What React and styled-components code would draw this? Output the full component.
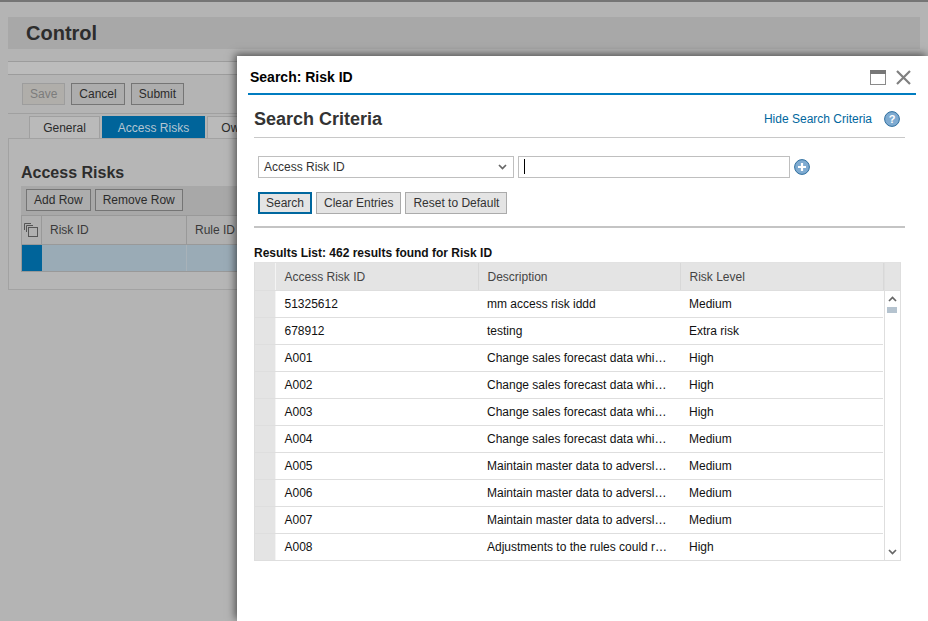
import React from 'react';
import styled, { createGlobalStyle } from 'styled-components';

const GlobalStyle = createGlobalStyle`
  html, body {
    margin: 0;
    padding: 0;
    height: 100%;
    overflow: hidden;
  }
  body {
    font-family: "Liberation Sans", Arial, sans-serif;
    font-size: 12px;
    color: #000;
    background: #b4b4b4;
  }
`;

const Page = styled.div`
  position: relative;
  width: 928px;
  height: 621px;
  overflow: hidden;
  box-sizing: border-box;
  border-top: 2px solid #757575;
  padding: 15px 8px 0;
  background: #b4b4b4;
`;

const PageHeader = styled.div`
  height: 32px;
  background: #a8a8a8;
  display: flex;
  align-items: center;
  padding-left: 18px;
`;

const PageTitle = styled.h1`
  margin: 0;
  font-size: 20px;
  font-weight: bold;
  color: #2d2d2d;
`;

const Strip = styled.div`
  margin-top: 12px;
  height: 12px;
  background: #bcbcbc;
  border-top: 1px solid #9c9c9c;
  border-bottom: 1px solid #9c9c9c;
`;

const Toolbar = styled.div`
  height: 38px;
  display: flex;
  align-items: center;
  gap: 6px;
  padding: 0 14px;
  border-bottom: 1px solid #a0a0a0;
`;

const BgButton = styled.button`
  height: 22px;
  padding: 0 7px;
  font: 12px "Liberation Sans", Arial, sans-serif;
  color: ${({ disabled }) => (disabled ? '#7c7c7c' : '#2b2b2b')};
  background: ${({ disabled }) => (disabled ? '#b0aeaa' : '#adadad')};
  border: 1px solid ${({ disabled }) => (disabled ? '#9d9d9d' : '#757575')};
`;

const Tabs = styled.div`
  display: flex;
  gap: 2px;
  margin-top: 2px;
  padding-left: 21px;
  height: 22px;
`;

const Tab = styled.div`
  width: ${({ $w }) => $w}px;
  box-sizing: border-box;
  display: flex;
  align-items: center;
  justify-content: center;
  color: ${({ $active }) => ($active ? '#b5c6d2' : '#2b2b2b')};
  background: ${({ $active }) => ($active ? '#00649a' : '#bababa')};
  border: 1px solid ${({ $active }) => ($active ? '#00649a' : '#a0a0a0')};
  border-bottom: 0;
`;

const Panel = styled.div`
  height: 152px;
  box-sizing: border-box;
  background: #b6b6b6;
  border: 1px solid #a2a2a2;
  padding: 24px 12px 0;
`;

const PanelTitle = styled.h2`
  margin: 0;
  font-size: 16px;
  line-height: 20px;
  font-weight: bold;
  color: #2d2d2d;
`;

const TableBar = styled.div`
  height: 29px;
  box-sizing: border-box;
  margin-top: 3px;
  background: #a8a8a8;
  display: flex;
  align-items: center;
  gap: 4px;
  padding: 0 0 1px 5px;
`;

const BgGrid = styled.div`
  display: grid;
  grid-template-columns: 20px 145px 200px;
  grid-template-rows: 29px 26px;
  border: 1px solid #999;
  border-right: 0;
`;

const BgHead = styled.div`
  display: flex;
  align-items: center;
  padding-left: 8px;
  color: #3a3a3a;
  background: #b0b0b0;
  border-right: 1px solid #999;
  border-bottom: 1px solid #999;
`;

const BgCorner = styled(BgHead)`
  padding-left: 1px;
`;

const BgMarker = styled.div`
  background: #00649a;
`;

const BgCell = styled.div`
  background: #9aabb6;
  border-right: 1px solid #a8b2b9;
`;

const Dialog = styled.section`
  position: absolute;
  left: 237px;
  top: 54px;
  width: 691px;
  height: 565px;
  box-sizing: border-box;
  background: #fff;
  padding: 0 12px 0 11px;
  box-shadow: -2px -2px 8px rgba(0, 0, 0, 0.55);
`;

const DialogHeader = styled.header`
  height: 39px;
  display: flex;
  align-items: center;
  justify-content: space-between;
  box-sizing: border-box;
  padding: 5px 5px 0 2px;
  border-bottom: 2px solid #007cc0;
`;

const DialogTitle = styled.h1`
  margin: 0;
  font-size: 14px;
  font-weight: bold;
  color: #000;
`;

const HeaderIcons = styled.div`
  display: flex;
  align-items: center;
  gap: 10px;
`;

const Body = styled.div`
  padding: 0 11px 0 6px;
`;

const CriteriaHead = styled.div`
  height: 43px;
  box-sizing: border-box;
  display: flex;
  align-items: center;
  justify-content: space-between;
  border-bottom: 1px solid #c8c8c8;
  padding: 6px 5px 0 0;
`;

const CriteriaTitle = styled.h2`
  margin: 0;
  font-size: 18px;
  font-weight: bold;
  color: #333;
`;

const HideLink = styled.a`
  display: flex;
  align-items: center;
  gap: 12px;
  color: #00679e;
  text-decoration: none;
`;

const SearchRow = styled.div`
  display: flex;
  align-items: center;
  gap: 4px;
  margin: 18px 0 0 4px;
`;

const FieldBox = styled.div`
  height: 22px;
  box-sizing: border-box;
  width: ${({ $w }) => $w}px;
  display: flex;
  align-items: center;
  justify-content: space-between;
  padding: 0 6px 1px 5px;
  color: #333;
  background: #fff;
  border: 1px solid #bfbfbf;
`;

const Caret = styled.span`
  width: 1px;
  height: 15px;
  background: #000;
`;

const Actions = styled.div`
  display: flex;
  gap: 4px;
  margin: 14px 0 0 4px;
`;

const ActionButton = styled.button`
  height: 22px;
  box-sizing: border-box;
  padding: 0 ${({ $focus }) => ($focus ? 6 : 7)}px;
  font: 12px "Liberation Sans", Arial, sans-serif;
  color: #333;
  background: #e4e4e4;
  border: ${({ $focus }) => ($focus ? '2px solid #00679e' : '1px solid #ababab')};
`;

const Divider = styled.hr`
  margin: 12px 0 0;
  height: 2px;
  border: 0;
  background: #c4c4c4;
`;

const ResultsLabel = styled.div`
  margin-top: 17px;
  height: 17px;
  line-height: 16px;
  font-weight: bold;
  color: #111;
`;

const ResultsWrap = styled.div`
  display: flex;
  width: 647px;
  box-sizing: border-box;
  border: 1px solid #dedede;
  border-top: 1px solid #e2e2e2;
`;

const ResultsTable = styled.table`
  width: 628px;
  border-collapse: collapse;
  table-layout: fixed;

  tbody tr:last-child td {
    border-bottom: 0;
  }
`;

const SelectorCell = styled.td`
  padding: 0;
  background: #e4e4e4;
  border-right: 1px solid #f4f4f4;
  border-bottom: 1px solid #dedede;
`;

const HeadCell = styled.th`
  height: 27px;
  padding: 0 9px;
  text-align: left;
  font-weight: normal;
  color: #444;
  background: #e4e4e4;
  border-right: 1px solid #d8d8d8;
  border-bottom: 1px solid #dedede;
`;

const Cell = styled.td`
  height: 26px;
  padding: 0 9px;
  color: #111;
  white-space: nowrap;
  overflow: hidden;
  text-overflow: ellipsis;
  border-bottom: 1px solid #dedede;
`;

const ScrollCol = styled.div`
  width: 17px;
  box-sizing: border-box;
  display: flex;
  flex-direction: column;
  align-items: center;
  border-left: 1px solid #dedede;
`;

const ScrollHead = styled.div`
  align-self: stretch;
  height: 27px;
  flex: none;
  background: #e4e4e4;
  border-bottom: 1px solid #dedede;
`;

const ScrollThumb = styled.div`
  width: 10px;
  height: 6px;
  margin-top: 5px;
  background: #b5c3cf;
`;

const ScrollSpacer = styled.div`
  flex: 1;
`;

const ArrowUp = styled.svg`
  margin-top: 5px;
`;

const ArrowDown = styled.svg`
  margin-bottom: 5px;
`;

const rows = [
  ['51325612', 'mm access risk iddd', 'Medium'],
  ['678912', 'testing', 'Extra risk'],
  ['A001', 'Change sales forecast data which could lead to errors', 'High'],
  ['A002', 'Change sales forecast data which could lead to errors', 'High'],
  ['A003', 'Change sales forecast data which could lead to errors', 'High'],
  ['A004', 'Change sales forecast data which could lead to errors', 'Medium'],
  ['A005', 'Maintain master data to adversly affect results', 'Medium'],
  ['A006', 'Maintain master data to adversly affect results', 'Medium'],
  ['A007', 'Maintain master data to adversly affect results', 'Medium'],
  ['A008', 'Adjustments to the rules could result in errors', 'High'],
];

const CopyIcon = () => (
  <svg width="16" height="16" viewBox="0 0 16 16" fill="none" stroke="#555" strokeWidth="1">
    <path d="M1.5 8V1.5H8M3.5 10V3.5H10" />
    <rect x="5.5" y="5.5" width="9" height="9" />
  </svg>
);

const MaximizeIcon = () => (
  <svg width="16" height="15" viewBox="0 0 16 15">
    <rect x="0.5" y="0.5" width="15" height="14" fill="#fff" stroke="#8a8a8a" />
    <rect x="0" y="0" width="16" height="4" fill="#777" />
  </svg>
);

const CloseIcon = () => (
  <svg width="15" height="15" viewBox="0 0 15 15" stroke="#808080" strokeWidth="2.2">
    <path d="M1 1l13 13M14 1L1 14" />
  </svg>
);

const HelpIcon = () => (
  <svg width="16" height="16" viewBox="0 0 16 16">
    <circle cx="8" cy="8" r="7.4" fill="#7fabd1" stroke="#2f6f9f" />
    <text x="8" y="12" textAnchor="middle" fontSize="11" fontWeight="bold" fontFamily="Liberation Sans" fill="#fff">?</text>
  </svg>
);

const PlusIcon = () => (
  <svg width="16" height="16" viewBox="0 0 16 16">
    <circle cx="8" cy="8" r="7.4" fill="#7fabd1" stroke="#2f6f9f" />
    <path d="M8 4v8M4 8h8" stroke="#fff" strokeWidth="2.2" />
  </svg>
);

const ChevronDown = () => (
  <svg width="9" height="6" viewBox="0 0 9 6" fill="none" stroke="#666" strokeWidth="1.7">
    <path d="M1 1l3.5 3.5L8 1" />
  </svg>
);

export default function App() {
  return (
    <>
      <GlobalStyle />
      <Page>
        <PageHeader>
          <PageTitle>Control</PageTitle>
        </PageHeader>
        <Strip />
        <Toolbar>
          <BgButton disabled>Save</BgButton>
          <BgButton>Cancel</BgButton>
          <BgButton>Submit</BgButton>
        </Toolbar>
        <Tabs>
          <Tab $w={71}>General</Tab>
          <Tab $w={103} $active>Access Risks</Tab>
          <Tab $w={70}>Owners</Tab>
        </Tabs>
        <Panel>
          <PanelTitle>Access Risks</PanelTitle>
          <TableBar>
            <BgButton>Add Row</BgButton>
            <BgButton>Remove Row</BgButton>
          </TableBar>
          <BgGrid>
            <BgCorner><CopyIcon /></BgCorner>
            <BgHead>Risk ID</BgHead>
            <BgHead>Rule ID</BgHead>
            <BgMarker />
            <BgCell />
            <BgCell />
          </BgGrid>
        </Panel>

        <Dialog>
          <DialogHeader>
            <DialogTitle>Search: Risk ID</DialogTitle>
            <HeaderIcons>
              <MaximizeIcon />
              <CloseIcon />
            </HeaderIcons>
          </DialogHeader>
          <Body>
            <CriteriaHead>
              <CriteriaTitle>Search Criteria</CriteriaTitle>
              <HideLink>
                Hide Search Criteria
                <HelpIcon />
              </HideLink>
            </CriteriaHead>
            <SearchRow>
              <FieldBox $w={256}>
                Access Risk ID
                <ChevronDown />
              </FieldBox>
              <FieldBox $w={272}><Caret /></FieldBox>
              <PlusIcon />
            </SearchRow>
            <Actions>
              <ActionButton $focus>Search</ActionButton>
              <ActionButton>Clear Entries</ActionButton>
              <ActionButton>Reset to Default</ActionButton>
            </Actions>
            <Divider />
            <ResultsLabel>Results List: 462 results found for Risk ID</ResultsLabel>
            <ResultsWrap>
              <ResultsTable>
                <colgroup>
                  <col width="20" />
                  <col width="203" />
                  <col width="202" />
                  <col width="203" />
                </colgroup>
                <thead>
                  <tr>
                    <SelectorCell as="th" />
                    <HeadCell>Access Risk ID</HeadCell>
                    <HeadCell>Description</HeadCell>
                    <HeadCell>Risk Level</HeadCell>
                  </tr>
                </thead>
                <tbody>
                  {rows.map((row) => (
                    <tr key={row[0]}>
                      <SelectorCell />
                      <Cell>{row[0]}</Cell>
                      <Cell>{row[1]}</Cell>
                      <Cell>{row[2]}</Cell>
                    </tr>
                  ))}
                </tbody>
              </ResultsTable>
              <ScrollCol>
                <ScrollHead />
                <ArrowUp width="9" height="6" viewBox="0 0 9 6" fill="none" stroke="#666" strokeWidth="1.7">
                  <path d="M1 5l3.5-3.5L8 5" />
                </ArrowUp>
                <ScrollThumb />
                <ScrollSpacer />
                <ArrowDown width="9" height="6" viewBox="0 0 9 6" fill="none" stroke="#666" strokeWidth="1.7">
                  <path d="M1 1l3.5 3.5L8 1" />
                </ArrowDown>
              </ScrollCol>
            </ResultsWrap>
          </Body>
        </Dialog>
      </Page>
    </>
  );
}
